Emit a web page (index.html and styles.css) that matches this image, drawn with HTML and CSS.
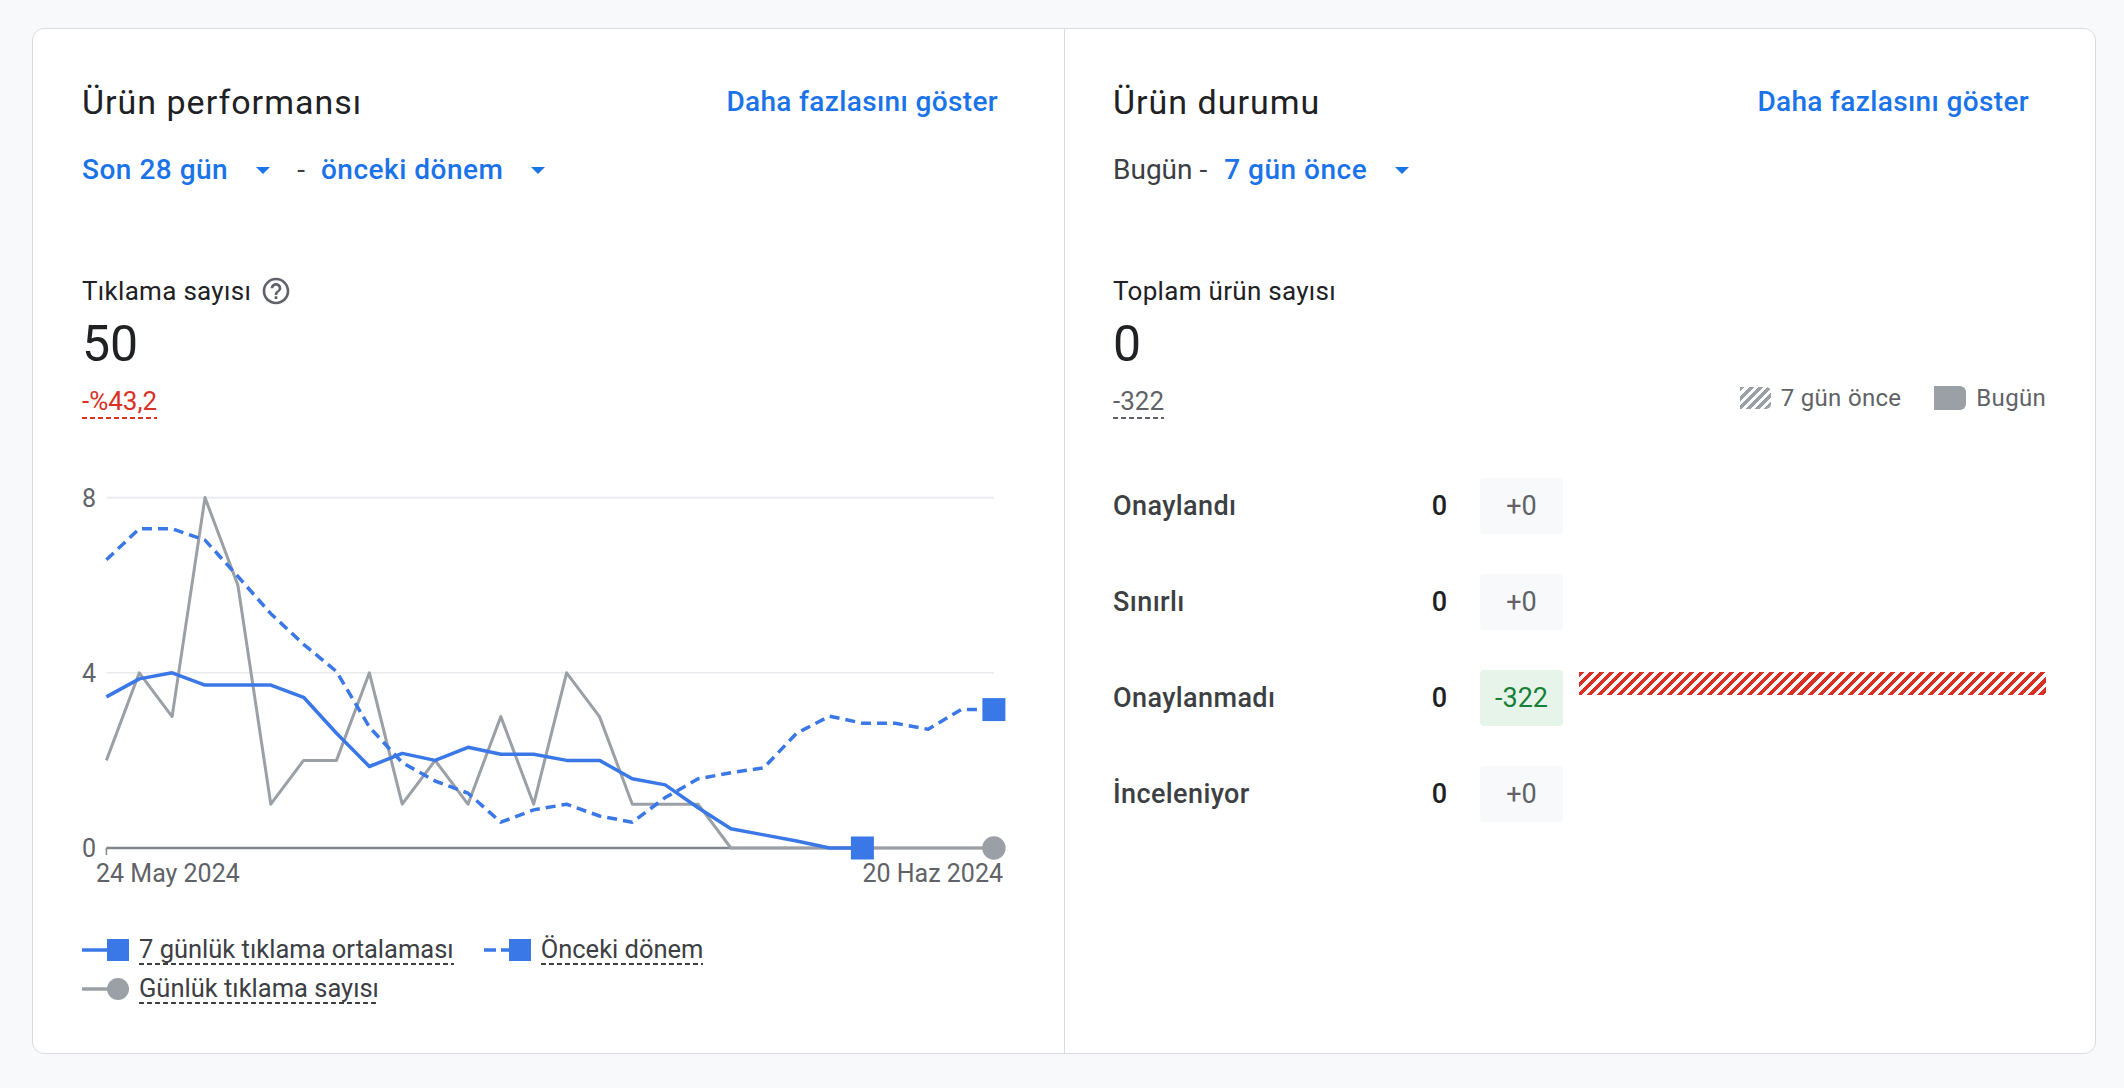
FILE: index.html
```html
<!DOCTYPE html>
<html lang="tr">
<head>
<meta charset="utf-8">
<title>Ürün performansı</title>
<link rel="stylesheet" href="styles.css">
</head>
<body>
<div class="card">
  <section class="panel">
    <div class="panel-head">
      <h2 class="panel-title">Ürün performansı</h2>
      <a class="more-link" href="#">Daha fazlasını göster</a>
    </div>
    <div class="range">
      <span class="range-select">Son 28 gün <span class="caret"></span></span>
      <span class="range-sep">-</span>
      <span class="range-select">önceki dönem <span class="caret"></span></span>
    </div>
    <div class="metric-label">
      <span>Tıklama sayısı</span>
      <svg class="help" width="32" height="32" viewBox="0 0 24 24"><path fill="#5f6368" d="M11 18h2v-2h-2v2zm1-16C6.48 2 2 6.48 2 12s4.48 10 10 10 10-4.48 10-10S17.52 2 12 2zm0 18c-4.41 0-8-3.590-8-8s3.59-8 8-8 8 3.59 8 8-3.59 8-8 8zm0-14c-2.21 0-4 1.79-4 4h2c0-1.1.9-2 2-2s2 .9 2 2c0 2-3 1.75-3 5h2c0-2.25 3-2.5 3-5 0-2.21-1.79-4-4-4z"/></svg>
    </div>
    <div class="metric-value">50</div>
    <div class="metric-change"><span class="dotted neg">-%43,2</span></div>

    <svg class="chart" width="933" height="430" viewBox="0 0 933 430">
      <line x1="24.4" y1="27.6" x2="911.9" y2="27.6" stroke="#e8eaed" stroke-width="1.6"/>
      <line x1="24.4" y1="202.8" x2="911.9" y2="202.8" stroke="#e8eaed" stroke-width="1.6"/>
      <line x1="24.4" y1="378" x2="911.9" y2="378" stroke="#80868b" stroke-width="2.5"/>
      <line x1="24.4" y1="378" x2="24.4" y2="385" stroke="#80868b" stroke-width="1.5"/>
      <text x="0" y="36.5">8</text>
      <text x="0" y="211.7">4</text>
      <text x="0" y="386.9">0</text>
      <text x="14" y="412">24 May 2024</text>
      <text x="921" y="412" text-anchor="end">20 Haz 2024</text>
      <polyline fill="none" stroke="#9aa0a6" stroke-width="3" stroke-linejoin="round"
        points="24.4,290.4 57.3,202.8 90.1,246.6 123,27.6 155.9,115.2 188.8,334.2 221.6,290.4 254.5,290.4 287.4,202.8 320.2,334.2 353.1,290.4 386,334.2 418.8,246.6 451.7,334.2 484.6,202.8 517.5,246.6 550.3,334.2 583.2,334.2 616.1,334.2 648.9,378 911.9,378"/>
      <polyline fill="none" stroke="#3b78e7" stroke-width="3.5" stroke-dasharray="10 6" stroke-linejoin="round"
        points="24.4,89.8 57.3,58.7 90.1,58.7 123,70.1 155.9,106.4 188.8,143.7 221.6,174.3 254.5,201.5 287.4,257.1 320.2,292.6 353.1,311 386,323.2 418.8,352.2 451.7,339.9 484.6,334.2 517.5,346 550.3,352.2 583.2,327.6 616.1,308.8 648.9,302.7 681.8,297.8 714.7,263.2 747.5,246.2 780.4,253.2 813.3,253.2 846.2,259.3 879,239.6 911.9,239.6"/>
      <polyline fill="none" stroke="#3b78e7" stroke-width="3.5" stroke-linejoin="round"
        points="24.4,226.9 57.3,208.9 90.1,202.8 123,215.1 155.9,215.1 188.8,215.1 221.6,227.3 254.5,263.2 287.4,296.5 320.2,283.4 353.1,290.4 386,277.3 418.8,284.3 451.7,284.3 484.6,290.4 517.5,290.4 550.3,308.8 583.2,314.9 616.1,337.7 648.9,358.7 681.8,364.9 714.7,371 747.5,378 780.4,378"/>
      <rect x="768.9" y="366.5" width="23" height="23" fill="#3b78e7"/>
      <rect x="900.4" y="228.1" width="23" height="23" fill="#3b78e7"/>
      <circle cx="911.9" cy="378" r="11.7" fill="#9aa0a6"/>
    </svg>

    <div class="legend">
      <div class="legend-item">
        <svg class="legend-icon" width="47" height="22" viewBox="0 0 47 22"><line x1="0" y1="11" x2="26" y2="11" stroke="#3b78e7" stroke-width="3.5"/><rect x="25" y="0" width="22" height="22" fill="#3b78e7"/></svg>
        <span class="dotted">7 günlük tıklama ortalaması</span>
      </div>
      <div class="legend-item">
        <svg class="legend-icon" width="47" height="22" viewBox="0 0 47 22"><line x1="0" y1="11" x2="26" y2="11" stroke="#3b78e7" stroke-width="3.5" stroke-dasharray="12 5"/><rect x="25" y="0" width="22" height="22" fill="#3b78e7"/></svg>
        <span class="dotted">Önceki dönem</span>
      </div>
      <div class="legend-item">
        <svg class="legend-icon" width="47" height="22" viewBox="0 0 47 22"><line x1="0" y1="11" x2="28" y2="11" stroke="#9aa0a6" stroke-width="3.5"/><circle cx="36" cy="11" r="11" fill="#9aa0a6"/></svg>
        <span class="dotted">Günlük tıklama sayısı</span>
      </div>
    </div>
  </section>

  <section class="panel">
    <div class="panel-head">
      <h2 class="panel-title">Ürün durumu</h2>
      <a class="more-link" href="#">Daha fazlasını göster</a>
    </div>
    <div class="range">
      <span class="range-fixed">Bugün -</span>
      <span class="range-select">7 gün önce <span class="caret"></span></span>
    </div>
    <div class="metric-label"><span>Toplam ürün sayısı</span></div>
    <div class="metric-value">0</div>
    <div class="change-row">
      <div class="metric-change"><span class="dotted muted">-322</span></div>
      <div class="bar-legend">
        <span class="bar-legend-item"><span class="swatch swatch-hatch"></span>7 gün önce</span>
        <span class="bar-legend-item"><span class="swatch swatch-solid"></span>Bugün</span>
      </div>
    </div>

    <div class="status-list">
      <div class="status-row">
        <span class="status-name">Onaylandı</span>
        <span class="status-count">0</span>
        <span class="status-delta">+0</span>
      </div>
      <div class="status-row">
        <span class="status-name">Sınırlı</span>
        <span class="status-count">0</span>
        <span class="status-delta">+0</span>
      </div>
      <div class="status-row">
        <span class="status-name">Onaylanmadı</span>
        <span class="status-count">0</span>
        <span class="status-delta down">-322</span>
        <span class="status-bar"></span>
      </div>
      <div class="status-row">
        <span class="status-name">İnceleniyor</span>
        <span class="status-count">0</span>
        <span class="status-delta">+0</span>
      </div>
    </div>
  </section>
</div>
</body>
</html>
```

FILE: styles.css
```css
* {
  box-sizing: border-box;
}

html,
body {
  margin: 0;
}

body {
  width: 2124px;
  height: 1088px;
  overflow: hidden;
  padding: 28px 28px 0 32px;
  background: #f8f9fa;
  font-family: Roboto, "Noto Sans", "Liberation Sans", sans-serif;
  color: #202124;
}

.card {
  display: grid;
  grid-template-columns: 1fr 1fr;
  height: 1026px;
  background: #ffffff;
  border: 1px solid #dadce0;
  border-radius: 12px;
}

.panel {
  min-width: 0;
  padding: 53px 49px 0 49px;
}

.panel + .panel {
  border-left: 1px solid #dadce0;
  padding-left: 48px;
}

.panel-head {
  display: flex;
  justify-content: space-between;
  align-items: flex-start;
}

.panel-title {
  margin: 0;
  font-size: 34px;
  font-weight: 400;
  letter-spacing: 1px;
  line-height: 40px;
  color: #202124;
}

.more-link {
  margin-right: 17px;
  font-size: 28px;
  font-weight: 500;
  letter-spacing: 0.35px;
  line-height: 40px;
  color: #1a73e8;
  text-decoration: none;
}

.range {
  display: flex;
  align-items: center;
  height: 36px;
  margin-top: 30px;
  font-size: 28px;
  line-height: 36px;
}

.range-select {
  display: inline-flex;
  align-items: center;
  gap: 28px;
  font-weight: 500;
  letter-spacing: 0.5px;
  color: #1a73e8;
}

.caret {
  width: 0;
  height: 0;
  border-left: 7px solid transparent;
  border-right: 7px solid transparent;
  border-top: 7px solid #1a73e8;
}

.range-sep {
  margin: 0 16px 0 27px;
  color: #3c4043;
}

.range-fixed {
  margin-right: 17px;
  color: #3c4043;
}

.metric-label {
  display: flex;
  align-items: center;
  gap: 9px;
  height: 34px;
  margin-top: 86px;
  font-size: 26px;
  letter-spacing: 0.3px;
  line-height: 34px;
  color: #202124;
}

.help {
  display: block;
}

.metric-value {
  margin-top: 8px;
  font-size: 50px;
  line-height: 56px;
  color: #202124;
}

.metric-change {
  height: 35px;
  margin-top: 12px;
  font-size: 26px;
  line-height: 35px;
}

.dotted {
  display: inline-block;
  background-image: linear-gradient(to right, currentColor 0 5px, transparent 5px 8px);
  background-size: 8px 2px;
  background-repeat: repeat-x;
  background-position: 0 100%;
}

.neg {
  color: #d93025;
}

.muted {
  color: #5f6368;
}

.chart {
  display: block;
  margin-top: 51px;
}

.chart text {
  font-family: Roboto, "Noto Sans", sans-serif;
  font-size: 25px;
  fill: #5f6368;
}

.legend {
  display: flex;
  flex-wrap: wrap;
  width: 640px;
  column-gap: 30px;
  row-gap: 8px;
  margin-top: 34px;
  font-size: 25.5px;
  line-height: 31px;
  color: #3c4043;
}

.legend-item {
  display: flex;
  align-items: center;
  gap: 10px;
}

.legend-icon {
  display: block;
}

.change-row {
  display: flex;
  justify-content: space-between;
  align-items: flex-start;
}

.change-row .metric-change {
  margin-top: 12px;
}

.bar-legend {
  display: flex;
  align-items: center;
  gap: 33px;
  margin-top: 11px;
  font-size: 24px;
  letter-spacing: 0.3px;
  line-height: 30px;
  color: #5f6368;
}

.bar-legend-item {
  display: flex;
  align-items: center;
  gap: 10px;
}

.swatch {
  display: block;
}

.swatch-hatch {
  width: 31px;
  height: 22px;
  background: repeating-linear-gradient(135deg, #9aa0a6 0 3.5px, #ffffff 3.5px 6.5px);
  border-radius: 0 5px 5px 0;
}

.swatch-solid {
  width: 32px;
  height: 24px;
  background: #9aa0a6;
  border-radius: 0 6px 6px 0;
}

.status-list {
  display: flex;
  flex-direction: column;
  gap: 40px;
  margin-top: 59px;
}

.status-row {
  display: flex;
  align-items: center;
  height: 56px;
}

.status-name {
  width: 290px;
  font-size: 27px;
  font-weight: 500;
  letter-spacing: 0.4px;
  color: #3c4043;
}

.status-count {
  width: 44px;
  text-align: right;
  font-size: 27px;
  font-weight: 500;
  color: #202124;
}

.status-delta {
  display: flex;
  align-items: center;
  justify-content: center;
  width: 83px;
  height: 56px;
  margin-left: 33px;
  border-radius: 4px;
  background: #f8f9fa;
  font-size: 27px;
  color: #5f6368;
}

.status-delta.down {
  background: #e6f4ea;
  color: #188038;
}

.status-bar {
  flex: 1;
  align-self: flex-start;
  height: 23px;
  margin: 2px 0 0 16px;
  background: repeating-linear-gradient(135deg, #d93025 0 3.6px, #ffffff 3.6px 7.1px);
}
```
